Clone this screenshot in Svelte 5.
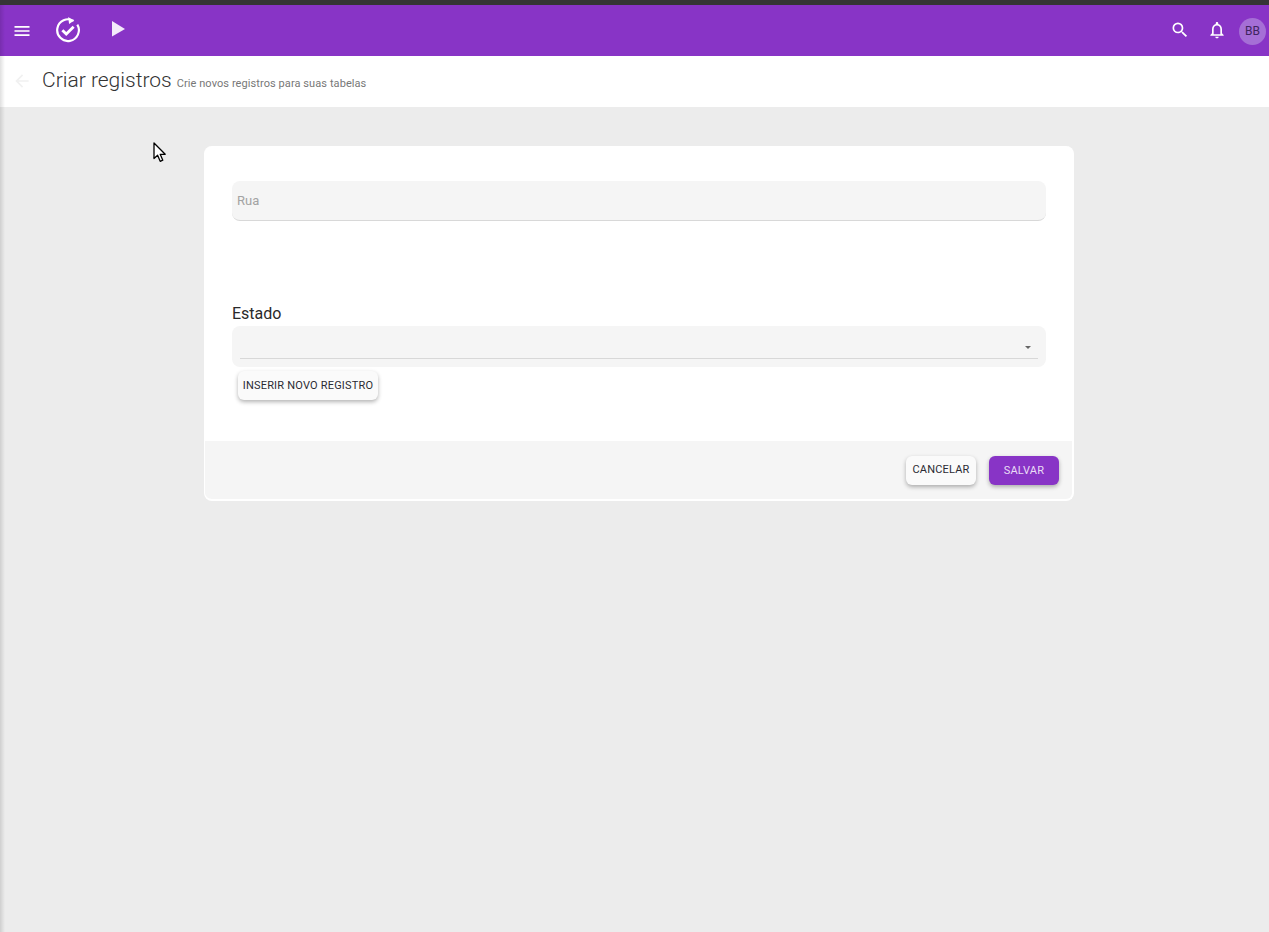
<script>
  let rua = $state('');
  let estado = $state('');
</script>

<div class="page">
  <div class="edge"></div>
  <div class="titlebar"></div>

  <header class="toolbar">
    <div class="left">
      <button class="icon menu" aria-label="Menu">
        <svg viewBox="0 0 24 24" width="20" height="20"><path d="M3 18h18v-2H3v2zm0-5h18v-2H3v2zm0-7v2h18V6H3z" fill="currentColor" /></svg>
      </button>
      <svg class="logo" viewBox="0 0 24 24" width="26" height="26" fill="none" stroke="currentColor">
        <path d="M17.2 3.6A10 10 0 1 0 20.6 7" stroke-width="2" />
        <path d="M12.2 0l5.2 3.4-4.4 3z" fill="currentColor" stroke="none" />
        <path d="M6.8 12.2l3.6 3.6 6.8-6.8" stroke-width="2.6" />
      </svg>
      <button class="icon play" aria-label="Play">
        <svg viewBox="0 0 24 24" width="24" height="24"><path d="M6 4v15.6L19 12z" fill="currentColor" /></svg>
      </button>
    </div>
    <div class="right">
      <button class="icon search" aria-label="Buscar">
        <svg viewBox="0 0 24 24" width="20" height="20"><path d="M15.5 14h-.79l-.28-.27A6.47 6.47 0 0 0 16 9.5 6.5 6.5 0 1 0 9.5 16c1.61 0 3.09-.59 4.23-1.57l.27.28v.79l5 4.99L20.49 19l-4.99-5zm-6 0C7.01 14 5 11.99 5 9.5S7.01 5 9.5 5 14 7.01 14 9.5 11.99 14 9.5 14z" fill="currentColor" /></svg>
      </button>
      <button class="icon bell" aria-label="Notificações">
        <svg viewBox="0 0 24 24" width="20" height="20"><path d="M12 22c1.1 0 2-.9 2-2h-4c0 1.1.9 2 2 2zm6-6v-5c0-3.07-1.63-5.64-4.5-6.32V4c0-.83-.67-1.5-1.5-1.5s-1.5.67-1.5 1.5v.68C7.64 5.36 6 7.92 6 11v5l-2 2v1h16v-1l-2-2zm-2 1H8v-6c0-2.48 1.51-4.5 4-4.5s4 2.02 4 4.5v6z" fill="currentColor" /></svg>
      </button>
      <div class="avatar">BB</div>
    </div>
  </header>

  <div class="subheader">
    <svg class="back" viewBox="0 0 24 24" width="20" height="20"><path d="M20 11H7.83l5.59-5.59L12 4l-8 8 8 8 1.41-1.41L7.83 13H20v-2z" fill="currentColor" /></svg>
    <h1>Criar registros</h1>
    <span class="hint">Crie novos registros para suas tabelas</span>
  </div>

  <main class="content">
    <form class="card" onsubmit={(e) => e.preventDefault()}>
      <div class="body">
        <input class="text-field" type="text" placeholder="Rua" bind:value={rua} />

        <label class="field-label" for="estado">Estado</label>
        <div class="select-field">
          <select id="estado" bind:value={estado}>
            <option value=""></option>
          </select>
          <span class="caret"></span>
        </div>
        <button class="btn add" type="button">INSERIR NOVO REGISTRO</button>
      </div>

      <div class="footer">
        <button class="btn cancel" type="button">CANCELAR</button>
        <button class="btn save" type="submit">SALVAR</button>
      </div>
    </form>
  </main>

  <svg class="cursor" viewBox="0 0 14 22" width="14" height="22">
    <path d="M1 1v15.5l3.6-3.2 2.6 6 2.6-1.1-2.6-5.9h5z" fill="#fff" stroke="#000" stroke-width="1.3" stroke-linejoin="round" />
  </svg>
</div>

<style>
  :global(body) {
    margin: 0;
    background: #ececec;
  }

  .page {
    position: relative;
    height: 932px;
    overflow: hidden;
    display: flex;
    flex-direction: column;
    font-family: Roboto, "Liberation Sans", sans-serif;
    background: #ececec;
  }

  .edge {
    position: absolute;
    top: 5px;
    left: 0;
    bottom: 0;
    width: 5px;
    background: linear-gradient(to right, rgba(0, 0, 0, 0.12), rgba(0, 0, 0, 0));
    pointer-events: none;
    z-index: 2;
  }

  .titlebar {
    height: 5px;
    flex: none;
    background: #353535;
  }

  .toolbar {
    height: 51px;
    flex: none;
    display: flex;
    align-items: center;
    justify-content: space-between;
    background: #8834c6;
    color: #fff;
  }

  .left,
  .right {
    display: flex;
    align-items: center;
  }

  .left {
    padding-left: 12px;
  }

  .right {
    padding-right: 3px;
  }

  .icon {
    display: flex;
    align-items: center;
    justify-content: center;
    padding: 0;
    border: 0;
    background: none;
    color: inherit;
  }

  .menu {
    margin-top: 1px;
  }

  .logo {
    margin-left: 23px;
    margin-top: -2px;
  }

  .play {
    margin-left: 25px;
    margin-top: -3px;
    color: #f3eafa;
  }

  .search {
    margin-top: -1px;
    margin-right: -1px;
  }

  .bell {
    margin-left: 18px;
    margin-top: -2px;
  }

  .avatar {
    width: 27px;
    height: 27px;
    margin-left: 12px;
    margin-top: 1px;
    border-radius: 50%;
    background: #a56fd6;
    color: #3f2560;
    font-size: 12px;
    line-height: 27px;
    text-align: center;
  }

  .subheader {
    height: 51px;
    flex: none;
    display: flex;
    align-items: center;
    padding-left: 12px;
    padding-bottom: 4px;
    background: #fff;
    box-sizing: border-box;
  }

  .back {
    color: #f1f1f1;
    margin-top: 2px;
  }

  h1 {
    margin: 0 0 0 10px;
    font-size: 21px;
    font-weight: 300;
    color: #333;
    line-height: 48px;
  }

  .hint {
    margin-left: 5px;
    margin-top: 7px;
    font-size: 11px;
    font-weight: 400;
    color: #777;
    letter-spacing: 0.08px;
  }

  .content {
    flex: 1;
    display: flex;
    align-items: flex-start;
    padding: 39px 0 0 204px;
  }

  .card {
    width: 870px;
    height: 355px;
    box-sizing: border-box;
    display: flex;
    flex-direction: column;
    background: #fff;
    border-radius: 8px;
    overflow: hidden;
    border-right: 2px solid #fff;
    border-bottom: 2px solid #fff;
    border-left: 1px solid #fff;
  }

  .body {
    flex: 1;
    display: flex;
    flex-direction: column;
    align-items: flex-start;
    padding: 35px 26px 0 27px;
  }

  .text-field {
    width: 100%;
    height: 40px;
    box-sizing: border-box;
    padding: 0 5px;
    border: 0;
    border-bottom: 1px solid #d8d8d8;
    border-radius: 8px;
    background: #f5f5f5;
    font: 400 13px Roboto, "Liberation Sans", sans-serif;
    color: #333;
    outline: none;
  }

  .text-field::placeholder {
    color: #a3a3a3;
    opacity: 1;
  }

  .field-label {
    margin-top: 83px;
    font-size: 16px;
    line-height: 20px;
    color: #2a2a2a;
  }

  .select-field {
    position: relative;
    width: 100%;
    height: 41px;
    margin-top: 2px;
    box-sizing: border-box;
    padding: 0 8px;
    border-radius: 8px;
    background: #f5f5f5;
  }

  select {
    display: block;
    width: 100%;
    height: 33px;
    border: 0;
    border-bottom: 1px solid #d8d8d8;
    background: none;
    appearance: none;
    outline: none;
  }

  .caret {
    position: absolute;
    top: 20px;
    right: 15px;
    border-left: 3.5px solid transparent;
    border-right: 3.5px solid transparent;
    border-top: 3.5px solid #666;
  }

  .btn {
    height: 29px;
    box-sizing: border-box;
    padding: 0;
    border: 0;
    border-radius: 6px;
    font: 400 11px Roboto, "Liberation Sans", sans-serif;
    letter-spacing: 0.2px;
    text-align: center;
    box-shadow: 0 2px 4px rgba(0, 0, 0, 0.3);
  }

  .add {
    width: 140px;
    margin: 4px 0 0 6px;
    background: #fafafa;
    color: #2b2b33;
  }

  .footer {
    height: 58px;
    flex: none;
    box-sizing: border-box;
    display: flex;
    align-items: center;
    justify-content: flex-end;
    gap: 13px;
    padding: 1px 13px 0 0;
    background: #f5f5f5;
  }

  .cancel {
    width: 70px;
    padding-bottom: 2px;
    background: #fafafa;
    color: #2b2b33;
  }

  .save {
    width: 70px;
    background: #8834c6;
    color: #e9dcf5;
  }

  .cursor {
    position: absolute;
    top: 142px;
    left: 153px;
    z-index: 3;
  }
</style>
